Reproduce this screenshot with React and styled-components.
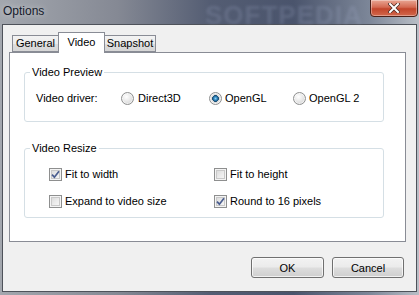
import React, { useState } from 'react';
import styled, { createGlobalStyle } from 'styled-components';

const Global = createGlobalStyle`
    html, body {
        margin: 0;
        padding: 0;
        width: 419px;
        height: 295px;
        overflow: hidden;
        background: #6d7380;
    }
`;

const Window = styled.div`
    position: relative;
    width: 419px;
    height: 295px;
    display: flex;
    flex-direction: column;
    background: linear-gradient(90deg, #a3a7ae 0%, #858994 28%, #545d73 50%, #4a546c 70%, #7c8698 88%, #b9bec6 100%);
    font-family: 'Liberation Sans', Arial, sans-serif;
    overflow: hidden;
`;

const TitleBar = styled.div`
    position: relative;
    height: 24px;
    flex: none;
    display: flex;
    align-items: flex-start;
    padding-left: 3px;
`;

const Title = styled.span`
    margin-top: 4px;
    font-size: 12px;
    line-height: 14px;
    color: #151a2a;
    text-shadow: 0 0 6px rgba(255, 255, 255, 0.6);
    z-index: 1;
`;

const Watermark = styled.span`
    position: absolute;
    left: 205px;
    top: 0px;
    font-size: 26px;
    font-weight: 700;
    letter-spacing: 1px;
    color: rgba(170, 182, 210, 0.2);
    filter: blur(1.4px);
`;

const CloseButton = styled.button`
    position: absolute;
    top: -1px;
    right: 1px;
    width: 48px;
    height: 18px;
    padding: 0;
    border: 1px solid #4a2018;
    border-radius: 0 0 4px 4px;
    background: linear-gradient(180deg, #e9a694 0%, #d46a52 45%, #c2452b 55%, #d2684c 100%);
    box-shadow: inset 0 0 0 1px rgba(255, 255, 255, 0.35);
    display: flex;
    align-items: center;
    justify-content: center;
`;

const Client = styled.div`
    flex: 1;
    margin: 0 2px 3px 2px;
    border: 1px solid #4e525a;
    background: #f0f0f0;
    display: flex;
    flex-direction: column;
    padding: 7px 10px 0 6px;
`;

const TabStrip = styled.div`
    display: flex;
    align-items: flex-end;
    height: 20px;
    padding-left: 3px;
`;

const Tab = styled.div`
    position: relative;
    box-sizing: border-box;
    width: ${(p) => p.$w}px;
    height: ${(p) => (p.$active ? 21 : 17)}px;
    margin-bottom: ${(p) => (p.$active ? -1 : 0)}px;
    margin-left: ${(p) => (p.$active ? -1 : 0)}px;
    margin-right: ${(p) => (p.$active ? -1 : 0)}px;
    z-index: ${(p) => (p.$active ? 2 : 1)};
    border: 1px solid #898c95;
    border-bottom: ${(p) => (p.$active ? 'none' : '1px solid #898c95')};
    background: ${(p) => (p.$active ? '#ffffff' : 'linear-gradient(180deg, #f3f3f3 0%, #ebebeb 50%, #dddddd 51%, #d6d6d6 100%)')};
    font-size: 11px;
    line-height: ${(p) => (p.$active ? 16 : 15)}px;
    padding-top: ${(p) => (p.$active ? 1 : 0)}px;
    text-align: center;
    color: #000;
`;

const Panel = styled.div`
    box-sizing: border-box;
    height: 190px;
    border: 1px solid #898c95;
    background: #ffffff;
    padding: 13px 21px 0 14px;
    display: flex;
    flex-direction: column;
    gap: 20px;
`;

const Group = styled.fieldset`
    margin: 0;
    padding: 0;
    border: 1px solid #d5dfe5;
    border-radius: 3px;
    min-width: 0;
`;

const Legend = styled.legend`
    margin-left: 5px;
    padding: 0 2px;
    font-size: 11px;
    line-height: 13px;
    color: #000;
`;

const GroupBody = styled.div`
    padding: ${(p) => p.$pad};
`;

const DriverRow = styled.div`
    display: grid;
    grid-template-columns: 85px 88px 84px auto;
    align-items: center;
    height: 13px;
`;

const Label = styled.span`
    font-size: 11px;
    line-height: 13px;
    color: #000;
`;

const Option = styled.label`
    display: flex;
    align-items: center;
    gap: ${(p) => p.$gap}px;
    font-size: 11px;
    line-height: 13px;
    color: #000;
    cursor: default;
`;

const RadioDot = styled.span`
    box-sizing: border-box;
    width: 13px;
    height: 13px;
    border-radius: 50%;
    border: 1px solid #8e8f8f;
    background: ${(p) =>
        p.$on
            ? 'radial-gradient(circle at 50% 50%, #8fd2f4 0%, #2f86c0 22%, #17496e 40%, #d8d8d8 46%, #f2f2f2 100%)'
            : 'radial-gradient(circle at 40% 35%, #ffffff 0%, #e6e6e6 50%, #c8c8c8 100%)'};
    box-shadow: inset 0 0 0 1px rgba(255, 255, 255, 0.6);
    flex: none;
`;

const CheckGrid = styled.div`
    display: grid;
    grid-template-columns: 165px auto;
    row-gap: 14px;
`;

const Box = styled.span`
    box-sizing: border-box;
    width: 13px;
    height: 13px;
    border: 1px solid #8e8f8f;
    background: linear-gradient(135deg, #d4d4d4 0%, #eaeaea 50%, #fbfbfb 100%);
    box-shadow: inset 0 0 0 1px #f4f4f4, inset 0 0 0 2px #c9c9c9;
    display: flex;
    align-items: center;
    justify-content: center;
    flex: none;
`;

const ButtonRow = styled.div`
    display: flex;
    justify-content: flex-end;
    gap: 8px;
    padding: 15px 2px 0 0;
`;

const Button = styled.button`
    box-sizing: border-box;
    width: ${(p) => p.$w}px;
    height: 21px;
    padding: 0;
    border: 1px solid #707070;
    border-radius: 3px;
    background: linear-gradient(180deg, #f2f2f2 0%, #ebebeb 48%, #dddddd 52%, #cfcfcf 100%);
    box-shadow: inset 0 0 0 1px rgba(255, 255, 255, 0.7);
    font-family: 'Liberation Sans', Arial, sans-serif;
    font-size: 11px;
    color: #000;
`;

function Radio({ on, gap, children, onPick }) {
    return (
        <Option $gap={gap} onClick={onPick}>
            <RadioDot $on={on} />
            {children}
        </Option>
    );
}

function Check({ on, children, onToggle }) {
    return (
        <Option $gap={3} onClick={onToggle}>
            <Box>
                {on && (
                    <svg width="9" height="9" viewBox="0 0 9 9">
                        <path d="M1 4.6 L3.4 7.2 L8 1.2" fill="none" stroke="#4a5d8f" strokeWidth="1.7" />
                    </svg>
                )}
            </Box>
            {children}
        </Option>
    );
}

export default function App() {
    const [driver, setDriver] = useState('opengl');
    const [checks, setChecks] = useState({ width: true, height: false, expand: false, round: true });
    const flip = (k) => setChecks((c) => ({ ...c, [k]: !c[k] }));

    return (
        <>
            <Global />
            <Window>
                <TitleBar>
                    <Watermark>SOFTPEDIA</Watermark>
                    <Title>Options</Title>
                    <CloseButton aria-label="Close">
                        <svg width="12" height="10" viewBox="0 0 12 10">
                            <path d="M2 1 L10 9 M10 1 L2 9" stroke="#4a2a24" strokeWidth="3.4" strokeLinecap="square" />
                            <path d="M2 1 L10 9 M10 1 L2 9" stroke="#ffffff" strokeWidth="2" strokeLinecap="square" />
                        </svg>
                    </CloseButton>
                </TitleBar>
                <Client>
                    <TabStrip>
                        <Tab $w={47}>General</Tab>
                        <Tab $w={47} $active>Video</Tab>
                        <Tab $w={52}>Snapshot</Tab>
                    </TabStrip>
                    <Panel>
                        <Group>
                            <Legend>Video Preview</Legend>
                            <GroupBody $pad="13px 0 16px 11px">
                                <DriverRow>
                                    <Label>Video driver:</Label>
                                    <Radio gap={4} on={driver === 'd3d'} onPick={() => setDriver('d3d')}>Direct3D</Radio>
                                    <Radio gap={3} on={driver === 'opengl'} onPick={() => setDriver('opengl')}>OpenGL</Radio>
                                    <Radio gap={3} on={driver === 'opengl2'} onPick={() => setDriver('opengl2')}>OpenGL 2</Radio>
                                </DriverRow>
                            </GroupBody>
                        </Group>
                        <Group>
                            <Legend>Video Resize</Legend>
                            <GroupBody $pad="13px 0 9px 24px">
                                <CheckGrid>
                                    <Check on={checks.width} onToggle={() => flip('width')}>Fit to width</Check>
                                    <Check on={checks.height} onToggle={() => flip('height')}>Fit to height</Check>
                                    <Check on={checks.expand} onToggle={() => flip('expand')}>Expand to video size</Check>
                                    <Check on={checks.round} onToggle={() => flip('round')}>Round to 16 pixels</Check>
                                </CheckGrid>
                            </GroupBody>
                        </Group>
                    </Panel>
                    <ButtonRow>
                        <Button $w={73}>OK</Button>
                        <Button $w={72}>Cancel</Button>
                    </ButtonRow>
                </Client>
            </Window>
        </>
    );
}
